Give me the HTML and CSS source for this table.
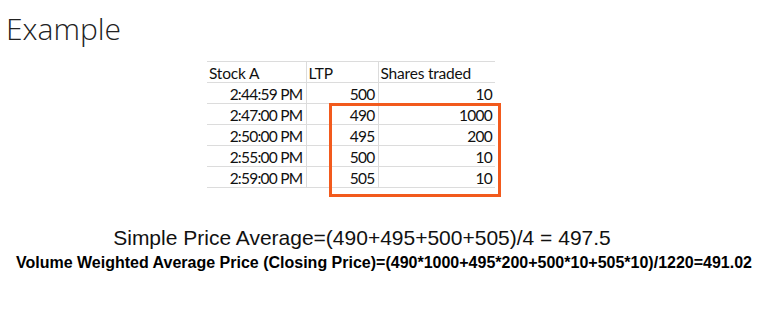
FILE: index.html
```html
<!DOCTYPE html>
<html>
<head>
<meta charset="utf-8">
<link rel="stylesheet" href="styles.css">
</head>
<body>
<div class="slide">
  <h1 class="title">Example</h1>
  <div class="table-wrap">
    <table class="data">
      <thead>
        <tr><th class="c1">Stock A</th><th class="c2">LTP</th><th class="c3">Shares traded</th></tr>
      </thead>
      <tbody>
        <tr><td>2:44:59 PM</td><td>500</td><td>10</td></tr>
        <tr><td>2:47:00 PM</td><td>490</td><td>1000</td></tr>
        <tr><td>2:50:00 PM</td><td>495</td><td>200</td></tr>
        <tr><td>2:55:00 PM</td><td>500</td><td>10</td></tr>
        <tr><td>2:59:00 PM</td><td>505</td><td>10</td></tr>
      </tbody>
    </table>
    <div class="highlight"></div>
  </div>
  <p class="simple">Simple Price Average=(490+495+500+505)/4 = 497.5</p>
  <p class="vwap">Volume Weighted Average Price (Closing Price)=(490*1000+495*200+500*10+505*10)/1220=491.02</p>
</div>
</body>
</html>
```
FILE: styles.css
```css
html, body {
  margin: 0;
  padding: 0;
  background: #ffffff;
}
.slide {
  width: 768px;
  height: 310px;
  display: flex;
  flex-direction: column;
  color: #1a1a1a;
}
.title {
  margin: 10px 0 0 6px;
  font-family: "Open Sans", sans-serif;
  font-weight: 300;
  font-size: 30px;
  line-height: 38px;
  color: #222;
}
.table-wrap {
  position: relative;
  margin: 13px 0 0 207px;
  width: 288px;
}
.data {
  border-collapse: collapse;
  font-family: "Lato", sans-serif;
  font-size: 15.5px;
  color: #111;
}
.data th, .data td {
  height: 20.8px;
  padding: 2px 3px 0 2px;
  border-top: 1px solid #dcdcdc;
  border-bottom: 1px solid #dcdcdc;
  line-height: 18px;
  box-sizing: border-box;
}
.data th {
  font-weight: normal;
  text-align: left;
  letter-spacing: -0.2px;
}
.data td {
  text-align: right;
  letter-spacing: -0.75px;
}
.data th + th, .data td + td {
  border-left: 1px solid #dcdcdc;
}
.c1 { width: 99px; }
.c2 { width: 72px; }
.c3 { width: 117px; }
.highlight {
  position: absolute;
  left: 122px;
  top: 42px;
  width: 166px;
  height: 88px;
  border: 3px solid #f25a1d;
}
.simple {
  margin: 38px 0 0 0;
  text-align: center;
  padding-right: 44px;
  font-family: "Liberation Sans", Arial, sans-serif;
  font-size: 21px;
  line-height: 24px;
  color: #111;
}
.vwap {
  margin: 4px 0 0 0;
  text-align: center;
  font-family: "Liberation Sans", Arial, sans-serif;
  font-weight: bold;
  font-size: 16px;
  line-height: 18px;
  color: #000;
}
```
